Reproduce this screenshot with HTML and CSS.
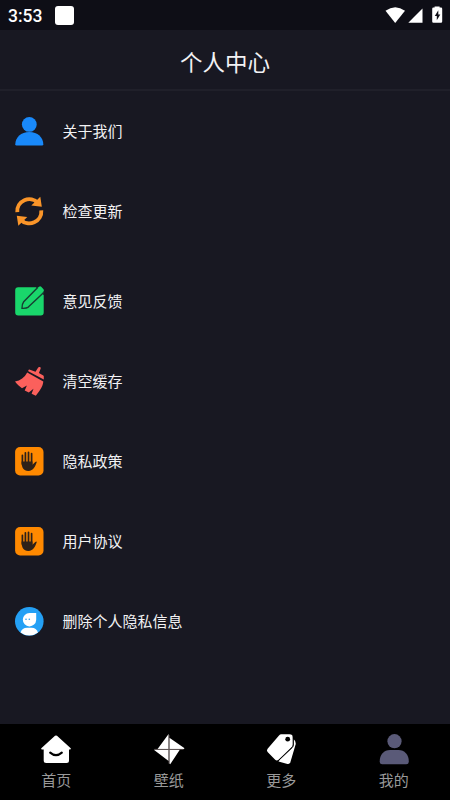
FILE: index.html
```html
<!DOCTYPE html>
<html lang="zh-CN">
<head>
<meta charset="utf-8">
<title>个人中心</title>
<link rel="stylesheet" href="styles.css">
</head>
<body>
<div class="status">
  <span class="time">3:53</span><span class="app"></span>
  <svg class="signals" width="60" height="20" viewBox="0 0 60 20"><g fill="#fff"><path d="M.5 5.800Q10.200-1.400 20 5.800L10.200 18Z"/><path d="M37.500 3.500V17.700H23.300Z"/><path d="M49.600 2.500V1.500h5v1H56q1.200 0 1.200 1.200V16.500q0 1.200-1.200 1.200H48.400q-1.200 0-1.200-1.200V3.700q0-1.200 1.200-1.200Z"/></g><path d="M53.300 5.200 49.800 11h2v4.300l3.500-5.800h-2Z" fill="#0e0e16"/></svg>
</div>
<header class="header">个人中心</header>
<main class="list">
  <div class="row"><svg class="icon" viewBox="0 0 30 30"><g fill="#1989fa"><circle cx="15.300" cy="8.400" r="7.400"/><path d="M1.300 28.300C1.300 21.500 7 16 15.300 16s14 5.500 14 12.300q0 1.200-1.200 1.200H2.500q-1.200 0-1.200-1.200Z"/></g></svg><span>关于我们</span></div>
  <div class="row"><svg class="icon" viewBox="0 0 30 30"><g id="arrow"><path d="M3.300 16.200A12 12 0 0 1 24 7" fill="none" stroke="#fa9529" stroke-width="3.900"/><path d="M26.300 .8 27.800 10.800 17.300 9.500Z" fill="#fa9529"/></g><use href="#arrow" transform="rotate(180 15.300 15.300)"/></svg><span>检查更新</span></div>
  <div class="row gap"><svg class="icon" viewBox="0 0 30 30"><path d="M4.200 1.300H22L29.700 9V26.500q0 3-3 3H4.200q-3 0-3-3V4.300q0-3 3-3Z" fill="#19d66b"/><path d="M22 3 25 .7q1.200-1 2.200 0L29.500 3.200q.9 1 0 2.200L28 8Z" fill="#19d66b"/><path d="M23.700 1.600 9.700 15.800Q8.100 17.700 8 22.300 12.700 22.500 14.300 21.100L30 6.200" fill="none" stroke="#173d32" stroke-width="1.400"/></svg><span>意见反馈</span></div>
  <div class="row"><svg class="icon" viewBox="0 0 30 30"><g fill="#fb605c"><path d="M24.200 1.500q.6-.9 1.600-.5 1.300.4.900 1.500L24.900 6.900 29.300 9.400q.5.300.5 1V13.600L14.300 5.200q-.4-1.700 1-1.800l6.200 2.300Z"/><path d="M13.200 6.500 29.300 15.600C29 20.500 25.500 25.500 21.800 29.800L17.600 27.700 19.500 22.800 14.800 26.600 10.700 24.400 12.900 19.500 8 22.200C5.500 20.500 3 18.500 1 15.600 6.500 14.500 10.500 11.500 13.200 6.500Z"/></g></svg><span>清空缓存</span></div>
  <div class="row"><svg class="icon" viewBox="0 0 30 30"><g id="hand"><rect x="1.100" y="1.100" width="28.400" height="28.400" rx="5" fill="#ff8900"/><path d="M8.400 9.300V18M11.400 6.800V17M14.500 6.300V17M17.600 7.500V18" stroke="#2e2118" stroke-width="1.700" stroke-linecap="round" fill="none"/><path d="M7.550 15.500H18.450V18.700L21.300 15.900Q22.900 14.900 22.700 16.300C21.300 20 19.500 25 14.300 25 9.500 25 7.550 21.500 7.550 15.500Z" fill="#2e2118"/></g></svg><span>隐私政策</span></div>
  <div class="row"><svg class="icon" viewBox="0 0 30 30"><use href="#hand"/></svg><span>用户协议</span></div>
  <div class="row"><svg class="icon" viewBox="0 0 30 30"><circle cx="15.300" cy="15.300" r="14.300" fill="#24a0f5"/><path d="M15.500 7H22.200V14A6.700 6.700 0 1 1 15.500 7Z" fill="#fff"/><path d="M6.500 26.500Q8 21.800 13 21.800h4.600Q22.500 21.800 24 26.500A14.300 14.300 0 0 1 6.500 26.500Z" fill="#fff"/><circle cx="12" cy="13.300" r=".8" fill="#24a0f5"/><circle cx="15.300" cy="13.300" r=".8" fill="#24a0f5"/></svg><span>删除个人隐私信息</span></div>
</main>
<nav class="tabs">
  <div class="tab"><svg class="icon" viewBox="0 0 30 30"><path d="M14 1.800q1-.8 2 0L29.700 14.300q.6 1-.6 1.200H28V26.500q0 2.500-2.500 2.500H5.200q-2.500 0-2.500-2.500V15.500H.9q-1.200-.2-.6-1.200Z" fill="#fff"/><path d="M9.200 18.700Q15 23.700 20.800 18.700" fill="none" stroke="#000" stroke-width="2.200" stroke-linecap="round"/></svg><span>首页</span></div>
  <div class="tab"><svg class="icon" viewBox="0 0 30 30"><path d="M14.600 0V15H3.600ZM-.2 15.700H14.600V26.900ZM15.400 15.700H25.800L16.200 30.300 15.400 29.500ZM15.400 15V3.800L30.200 14V15Z" fill="#fff"/><path d="M.5 15.350H29.500M15 1V29.500" stroke="#756868" stroke-width=".7"/></svg><span>壁纸</span></div>
  <div class="tab"><svg class="icon" viewBox="0 0 30 30"><path d="M27 4.500Q30.300 7.300 29.600 10.500L24.300 28.600Q23.500 30.400 21.500 30L12.500 27.500Z" fill="#fff"/><path d="M15.300.3H23.500Q26.800.3 26.800 3.500V10.500Q26.800 12 25.700 13L12.500 25.800Q10.800 27.400 9.200 25.800L1.600 18Q.2 16.400 1.600 14.700L13 1.500Q14 .3 15.300.3Z" fill="#fff" stroke="#000" stroke-width="1.200" paint-order="stroke"/><path d="M27.300 2V11Q27.300 12.500 26.200 13.600L12 27" fill="none" stroke="#000" stroke-width="1"/><circle cx="21.700" cy="5.200" r="2.400" fill="#000"/></svg><span>更多</span></div>
  <div class="tab"><svg class="icon" viewBox="0 0 30 30"><g fill="#5a5a78"><circle cx="15.500" cy="7.200" r="7.100"/><path d="M.7 27.500C.7 20.500 5 16 11 16h8.500C25.500 16 29.800 20.500 29.800 27.500q0 2.700-2.500 2.700H3.200Q.7 30.200.7 27.500Z"/></g></svg><span>我的</span></div>
</nav>
</body>
</html>
```
FILE: styles.css
```css
* { box-sizing: border-box; }
body {
  margin: 0;
  height: 800px;
  display: flex;
  flex-direction: column;
  overflow: hidden;
  background: #181822;
  color: #f2f2f4;
  font-family: "Noto Sans CJK SC", sans-serif;
}
.status {
  height: 30px;
  display: flex;
  align-items: center;
  padding: 0 6px 0 8px;
  background: #0e0e16;
}
.time {
  width: 47px;
  padding-top: 2px;
  font: 500 17.5px/28px Roboto, sans-serif;
  color: #fff;
}
.app {
  width: 19px;
  height: 19px;
  border-radius: 3px;
  background: #fff;
}
.signals { margin: 0 -1px 0 auto; }
.header {
  height: 61px;
  border-bottom: 2px solid #20202a;
  text-align: center;
  font-size: 22.5px;
  line-height: 62px;
}
.list { flex: 1; }
.row {
  height: 80px;
  display: flex;
  align-items: center;
  gap: 18.5px;
  padding: 0 14px;
  font-size: 15px;
  line-height: 22px;
}
.row.gap { margin-top: 10px; }
.icon {
  width: 30px;
  height: 30px;
  flex: none;
  overflow: visible;
}
.tabs {
  height: 76px;
  display: flex;
  background: #000;
}
.tab {
  flex: 1;
  display: flex;
  flex-direction: column;
  align-items: center;
  gap: 5px;
  padding-top: 10px;
  font-size: 15px;
  line-height: 22px;
  color: #999;
}
```
